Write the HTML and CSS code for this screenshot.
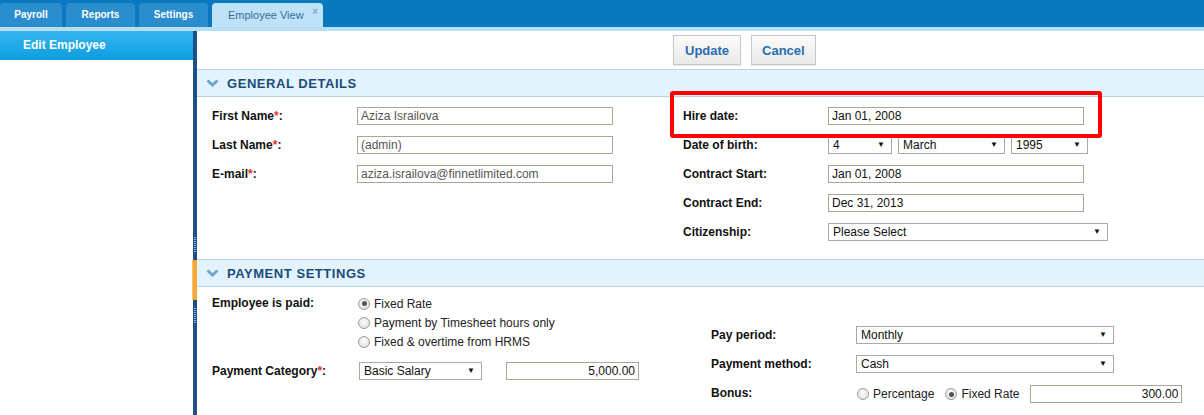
FILE: index.html
```html
<!DOCTYPE html>
<html lang="en">
<head>
    <meta charset="UTF-8">
    <meta name="viewport" content="width=device-width, initial-scale=1.0">
    <title>Employee View</title>
    <link rel="stylesheet" href="styles.css">
</head>
<body>
    <div class="topbar">
        <div class="tab first">Payroll</div>
        <div class="tab">Reports</div>
        <div class="tab">Settings</div>
        <div class="tab active">Employee View <span class="close">×</span></div>
    </div>
    <div class="layout">
        <div class="sidebar">
            <div class="sidebar-title">Edit Employee</div>
        </div>
        <div class="splitter">
            <div class="grip"></div>
            <div class="handle"></div>
            <div class="grip"></div>
        </div>
        <div class="main">
            <div class="actions">
                <button class="btn">Update</button>
                <button class="btn">Cancel</button>
            </div>

            <div class="section-head">
                <svg width="13" height="8" viewBox="0 0 13 8"><path d="M1.5 1.5 L6.5 6 L11.5 1.5" stroke="#6ea5ce" stroke-width="3" fill="none"/></svg>
                General Details
            </div>
            <div class="section-body general">
                <div class="col">
                    <div class="field">
                        <label>First Name<span class="req">*</span>:</label>
                        <input class="input muted" type="text" value="Aziza Israilova">
                    </div>
                    <div class="field">
                        <label>Last Name<span class="req">*</span>:</label>
                        <input class="input muted" type="text" value="(admin)">
                    </div>
                    <div class="field">
                        <label>E-mail<span class="req">*</span>:</label>
                        <input class="input muted" type="text" value="aziza.israilova@finnetlimited.com">
                    </div>
                </div>
                <div class="col">
                    <div class="field">
                        <label>Hire date:</label>
                        <input class="input" type="text" value="Jan 01, 2008">
                    </div>
                    <div class="field">
                        <label>Date of birth:</label>
                        <div class="select-group">
                            <div class="select w-day"><span>4</span><span class="arrow">▼</span></div>
                            <div class="select w-month"><span>March</span><span class="arrow">▼</span></div>
                            <div class="select w-year"><span>1995</span><span class="arrow">▼</span></div>
                        </div>
                    </div>
                    <div class="field">
                        <label>Contract Start:</label>
                        <input class="input" type="text" value="Jan 01, 2008">
                    </div>
                    <div class="field">
                        <label>Contract End:</label>
                        <input class="input" type="text" value="Dec 31, 2013">
                    </div>
                    <div class="field">
                        <label>Citizenship:</label>
                        <div class="select w-wide"><span>Please Select</span><span class="arrow">▼</span></div>
                    </div>
                </div>
            </div>

            <div class="section-head">
                <svg width="13" height="8" viewBox="0 0 13 8"><path d="M1.5 1.5 L6.5 6 L11.5 1.5" stroke="#6ea5ce" stroke-width="3" fill="none"/></svg>
                Payment Settings
            </div>
            <div class="section-body payment">
                <div class="col">
                    <div class="field-top">
                        <label>Employee is paid:</label>
                        <div class="radio-list">
                            <div class="radio-row"><span class="radio checked"></span>Fixed Rate</div>
                            <div class="radio-row"><span class="radio"></span>Payment by Timesheet hours only</div>
                            <div class="radio-row"><span class="radio"></span>Fixed &amp; overtime from HRMS</div>
                        </div>
                    </div>
                    <div class="field category">
                        <label>Payment Category<span class="req">*</span>:</label>
                        <div class="select w-cat"><span>Basic Salary</span><span class="arrow">▼</span></div>
                        <input class="input amount" type="text" value="5,000.00">
                    </div>
                </div>
                <div class="col pay-col">
                    <div class="field">
                        <label>Pay period:</label>
                        <div class="select w-pay"><span>Monthly</span><span class="arrow">▼</span></div>
                    </div>
                    <div class="field">
                        <label>Payment method:</label>
                        <div class="select w-pay"><span>Cash</span><span class="arrow">▼</span></div>
                    </div>
                    <div class="field">
                        <label>Bonus:</label>
                        <div class="bonus">
                            <div class="radio-row"><span class="radio"></span>Percentage</div>
                            <div class="radio-row"><span class="radio checked"></span>Fixed Rate</div>
                            <input class="input bonus-amount" type="text" value="300.00">
                        </div>
                    </div>
                </div>
            </div>

            <div class="highlight"></div>
        </div>
    </div>
</body>
</html>
```

FILE: styles.css
```css
* {
    box-sizing: border-box;
}
body {
    margin: 0;
    font-family: "Liberation Sans", Arial, sans-serif;
    font-size: 12px;
    color: #111;
    background: #fff;
}

/* top tabs */
.topbar {
    display: flex;
    gap: 4px;
    height: 31px;
    padding-top: 3px;
    background: #0a78be;
    border-bottom: 4px solid #b6def7;
}
.tab {
    width: 69px;
    height: 24px;
    line-height: 24px;
    text-align: center;
    background: #2a8dcd;
    color: #fff;
    font-size: 10px;
    font-weight: bold;
    border-radius: 4px 4px 0 0;
}
.tab.first {
    width: 62px;
}
.tab.active {
    display: flex;
    width: 111px;
    padding: 0 5px 0 16px;
    background: #bee3f8;
    color: #3b6b9b;
    font-size: 11px;
    font-weight: normal;
}
.tab .close {
    margin-left: auto;
    line-height: 18px;
    font-size: 10px;
    font-weight: bold;
    color: #82a9c8;
}

/* page */
.layout {
    display: flex;
    min-height: 384px;
}
.sidebar {
    width: 193px;
}
.sidebar-title {
    height: 29px;
    line-height: 29px;
    padding-left: 23px;
    color: #fff;
    font-weight: bold;
    background: linear-gradient(#34b6ef, #0d9ddf);
}
.splitter {
    width: 4px;
    display: flex;
    flex-direction: column;
    align-items: center;
    gap: 8px;
    padding-top: 206px;
    background: #1e5086;
}
.grip {
    width: 2px;
    height: 15px;
    background: repeating-linear-gradient(#8ab7de 0 1px, transparent 1px 2px);
}
.handle {
    align-self: flex-end;
    width: 5px;
    height: 40px;
    background: #f6a93b;
    border-left: 1px solid #f8c170;
}
.main {
    flex: 1;
    position: relative;
}

.actions {
    display: flex;
    gap: 10px;
    height: 38px;
    padding: 4px 0 0 476px;
}
.btn {
    height: 30px;
    padding: 0 10px;
    font-family: inherit;
    font-size: 13px;
    font-weight: bold;
    color: #2b6cb0;
    background: linear-gradient(#fbfbfb, #e9e9e9);
    border: 1px solid #c6c6c6;
    box-shadow: 0 1px 1px rgba(0, 0, 0, 0.08);
}
.btn:first-child {
    padding: 0 11px;
}

.section-head {
    display: flex;
    align-items: center;
    gap: 8px;
    height: 28px;
    padding-left: 9px;
    background: #e2f3fd;
    border-top: 1px solid #b5d4ea;
    border-bottom: 1px solid #b5d4ea;
    color: #1b4b7b;
    font-size: 13px;
    font-weight: bold;
    text-transform: uppercase;
    letter-spacing: 0.55px;
}

.section-body {
    display: grid;
    padding-left: 15px;
}
.general {
    grid-template-columns: 471px 1fr;
    padding-top: 4px;
    padding-bottom: 13px;
}
.payment {
    grid-template-columns: 499px 1fr;
    padding-top: 7px;
}
.field {
    display: flex;
    align-items: center;
    height: 29px;
}
.field label,
.field-top label {
    flex: none;
    width: 145px;
    font-weight: bold;
}
.payment .col:first-child label {
    width: 146px;
}
.req {
    color: #e8302a;
}

.input {
    width: 256px;
    height: 18px;
    padding: 0 3px;
    font-family: inherit;
    font-size: 12px;
    color: #111;
    border: 1px solid #aaa596;
    background: #fff;
}
.input.muted {
    color: #555;
}
.amount {
    width: 133px;
    margin-left: 24px;
    text-align: right;
}
.bonus-amount {
    width: 152px;
    text-align: right;
}

.select-group {
    display: flex;
    gap: 6px;
}
.select {
    display: flex;
    align-items: center;
    justify-content: space-between;
    height: 18px;
    padding: 0 6px 0 4px;
    border: 1px solid #a9a9a9;
    background: #fff;
    color: #111;
}
.select .arrow {
    font-size: 8px;
}
.w-day { width: 64px; }
.w-month { width: 107px; }
.w-year { width: 77px; }
.w-wide { width: 280px; }
.w-cat { width: 123px; margin-left: 1px; }
.w-pay { width: 258px; }

/* radios */
.field-top {
    display: flex;
    align-items: flex-start;
}
.field-top label {
    line-height: 19px;
}
.radio-row {
    display: flex;
    align-items: center;
    gap: 4px;
    height: 19px;
    color: #222;
}
.radio {
    position: relative;
    width: 12px;
    height: 12px;
    border: 1px solid #9c9c9c;
    border-radius: 50%;
    background: radial-gradient(circle at 50% 40%, #fdfdfd, #dadada);
}
.radio.checked::after {
    content: "";
    position: absolute;
    top: 2.5px;
    left: 2.5px;
    width: 5px;
    height: 5px;
    border-radius: 50%;
    background: #555;
}
.category {
    margin-top: 5px;
}
.pay-col {
    padding-top: 26px;
}
.bonus {
    display: flex;
    align-items: center;
    gap: 11px;
    padding-left: 1px;
    margin-top: 3px;
}

/* annotation */
.highlight {
    position: absolute;
    left: 473px;
    top: 60px;
    width: 432px;
    height: 47px;
    border: 4px solid #f00;
    border-radius: 3px;
}
```
